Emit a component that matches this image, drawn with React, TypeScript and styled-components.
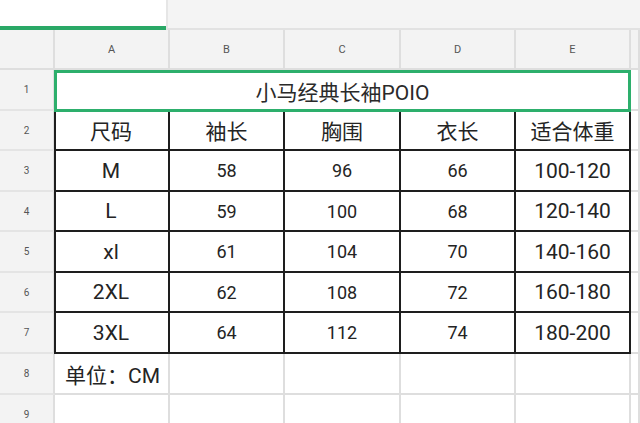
import React from 'react'
import styled, { createGlobalStyle } from 'styled-components'

const GlobalStyle = createGlobalStyle`
  html, body {
    margin: 0;
    padding: 0;
    background: #ffffff;
    overflow: hidden;
  }
  body {
    font-family: Roboto, 'Noto Sans CJK SC', sans-serif;
  }
`

const Page = styled.div`
  width: 640px;
  height: 423px;
  overflow: hidden;
  background: #ffffff;
`

const TabBar = styled.div`
  display: flex;
  height: 30px;
  box-sizing: border-box;
`

const Tab = styled.div<{ active?: boolean }>`
  box-sizing: border-box;
  height: 30px;
  flex: ${({ active }) => (active ? '0 0 166px' : '1')};
  background: ${({ active }) => (active ? '#ffffff' : '#f4f4f4')};
  border-bottom: ${({ active }) => (active ? '4px solid #2aa866' : '2px solid #e2e2e2')};
  border-left: ${({ active }) => (active ? 'none' : '2px solid #e6e6e6')};
`

const Sheet = styled.div`
  display: grid;
  grid-template-columns: 55px 115px 115px 116px 115px 115px 1fr;
  grid-template-rows: 40px 41px 40px 41px 40px 41px 40px 41px 41px 40px;
`

const Corner = styled.div`
  box-sizing: border-box;
  background: #f3f3f3;
  border-right: 2px solid #dedede;
  border-bottom: 2px solid #dedede;
`

const ColHead = styled.div`
  box-sizing: border-box;
  background: #f3f3f3;
  border-right: 2px solid #dedede;
  border-bottom: 2px solid #dedede;
  display: flex;
  align-items: center;
  justify-content: center;
  font-size: 11px;
  color: #555555;
`

const RowHead = styled.div`
  box-sizing: border-box;
  background: #f3f3f3;
  border-right: 2px solid #dedede;
  border-bottom: 2px solid #e4e4e4;
  display: flex;
  align-items: center;
  justify-content: center;
  font-size: 10px;
  color: #555555;
`

const TitleCell = styled.div`
  grid-column: span 5;
  box-sizing: border-box;
  border: 3px solid #2daf6c;
  margin: 0 0 -1px -1px;
  display: flex;
  align-items: center;
  justify-content: center;
  font-size: 21px;
  color: #2a2a2a;
  position: relative;
  z-index: 1;
`

const Cell = styled.div<{ ruled?: boolean; first?: boolean; big?: boolean; align?: 'left' | 'center' }>`
  box-sizing: border-box;
  display: flex;
  align-items: center;
  justify-content: ${({ align }) => (align === 'left' ? 'flex-start' : 'center')};
  padding-left: ${({ align }) => (align === 'left' ? '10px' : '0')};
  font-size: ${({ big }) => (big ? '21px' : '18px')};
  color: #242424;
  white-space: nowrap;
  border-right: ${({ ruled }) => (ruled ? '2px solid #1e1e1e' : '2px solid #dedede')};
  border-bottom: ${({ ruled }) => (ruled ? '2px solid #1e1e1e' : '2px solid #dedede')};
  box-shadow: ${({ ruled, first }) => (ruled && first ? 'inset 2px 0 0 #1e1e1e' : 'none')};
  margin-left: ${({ ruled, first }) => (ruled && first ? '-1px' : '0')};
`

const columns = ['A', 'B', 'C', 'D', 'E']

const sizeRows = [
  ['尺码', '袖长', '胸围', '衣长', '适合体重'],
  ['M', '58', '96', '66', '100-120'],
  ['L', '59', '100', '68', '120-140'],
  ['xl', '61', '104', '70', '140-160'],
  ['2XL', '62', '108', '72', '160-180'],
  ['3XL', '64', '112', '74', '180-200'],
]

export default function App() {
  return (
    <Page>
      <GlobalStyle />
      <TabBar>
        <Tab active />
        <Tab />
      </TabBar>
      <Sheet>
        <Corner />
        {columns.map(c => (
          <ColHead key={c}>{c}</ColHead>
        ))}
        <ColHead />

        <RowHead>1</RowHead>
        <TitleCell>小马经典长袖POIO</TitleCell>
        <Cell />

        {sizeRows.map((row, r) => (
          <React.Fragment key={r}>
            <RowHead>{r + 2}</RowHead>
            {row.map((v, i) => (
              <Cell key={i} ruled first={i === 0} big={r === 0 || i === 0 || i === 4}>
                {v}
              </Cell>
            ))}
            <Cell />
          </React.Fragment>
        ))}

        <RowHead>8</RowHead>
        <Cell big align="left">单位：CM</Cell>
        <Cell />
        <Cell />
        <Cell />
        <Cell />
        <Cell />

        <RowHead>9</RowHead>
        {[0, 1, 2, 3, 4, 5].map(i => (
          <Cell key={i} />
        ))}
      </Sheet>
    </Page>
  )
}
